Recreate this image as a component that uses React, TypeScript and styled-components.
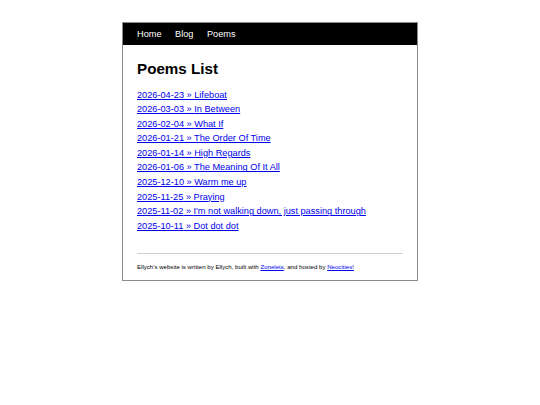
import React from "react";
import styled, {createGlobalStyle} from "styled-components";

const poems = [
  {date: "2026-04-23", title: "Lifeboat"},
  {date: "2026-03-03", title: "In Between"},
  {date: "2026-02-04", title: "What If"},
  {date: "2026-01-21", title: "The Order Of Time"},
  {date: "2026-01-14", title: "High Regards"},
  {date: "2026-01-06", title: "The Meaning Of It All"},
  {date: "2025-12-10", title: "Warm me up"},
  {date: "2025-11-25", title: "Praying"},
  {date: "2025-11-02", title: "I'm not walking down, just passing through"},
  {date: "2025-10-11", title: "Dot dot dot"},
];

const App: React.FC = () => {
  return (
    <>
      <GlobalStyle/>
      <Page>
        <Nav>
          <NavLink href="#">Home</NavLink>
          <NavLink href="#">Blog</NavLink>
          <NavLink href="#">Poems</NavLink>
        </Nav>
        <Main>
          <Title>Poems List</Title>
          <PoemList>
            {poems.map((p) => (
              <li key={p.date}>
                <PoemLink href="#">{p.date} » {p.title}</PoemLink>
              </li>
            ))}
          </PoemList>
          <Footer>
            Ellych's website is written by Ellych, built with{" "}
            <FooterLink href="#">Zonelets</FooterLink>, and hosted by{" "}
            <FooterLink href="#">Neocities!</FooterLink>
          </Footer>
        </Main>
      </Page>
    </>
  );
};

const GlobalStyle = createGlobalStyle`
  body {
    margin: 0;
    background: #fff;
    font-family: "Liberation Sans", Arial, sans-serif;
    color: #000;
  }
`;

const Page = styled.div`
  width: 294px;
  margin: 22px auto 0;
  border: 1px solid #8a8a8a;
  background: #fff;
`;

const Nav = styled.nav`
  display: flex;
  align-items: center;
  gap: 13.5px;
  height: 22px;
  padding: 0 14px;
  background: #000;
`;

const NavLink = styled.a`
  color: #fff;
  font-size: 9.2px;
  text-decoration: none;
`;

const Main = styled.main`
  padding: 0 14px 8px;
`;

const Title = styled.h1`
  margin: 14.5px 0 11px;
  font-size: 15.2px;
  line-height: 17px;
  font-weight: bold;
`;

const PoemList = styled.ul`
  list-style: none;
  margin: 0;
  padding: 0;
  font-size: 9.2px;
  line-height: 14.6px;
`;

const PoemLink = styled.a`
  color: #0000ee;
  text-decoration: underline;
`;

const Footer = styled.footer`
  margin-top: 20px;
  padding-top: 8px;
  border-top: 1px solid #cfcfcf;
  font-size: 6.1px;
  line-height: 10px;
`;

const FooterLink = styled.a`
  color: #0000ee;
  text-decoration: underline;
`;

export default App;
